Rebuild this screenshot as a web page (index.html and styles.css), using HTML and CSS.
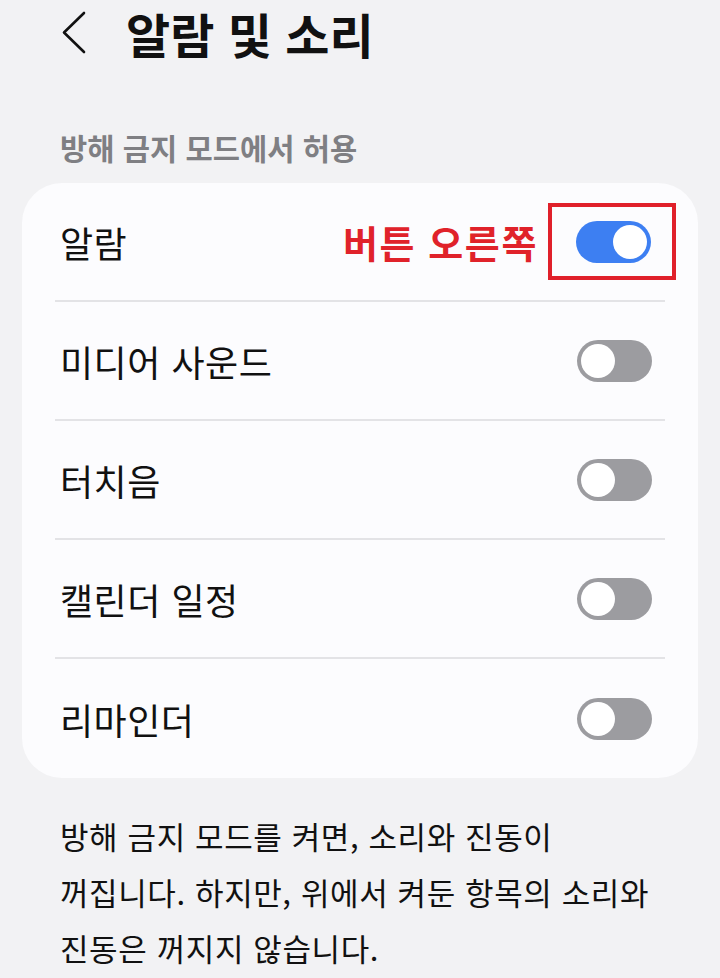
FILE: index.html
```html
<!DOCTYPE html>
<html lang="ko">
<head>
<meta charset="utf-8">
<link rel="stylesheet" href="styles.css">
</head>
<body>
<div class="page">
  <header class="topbar">
    <svg class="back" width="30" height="44" viewBox="0 0 30 44"><polyline points="24,3 4,22.5 24,42" fill="none" stroke="#111" stroke-width="2.6" stroke-linecap="round" stroke-linejoin="round"/></svg>
    <h1 class="title">알람 및 소리</h1>
  </header>
  <div class="section-label">방해 금지 모드에서 허용</div>
  <div class="card">
    <div class="row">
      <span class="label">알람</span>
      <span class="annot">버튼 오른쪽</span>
      <span class="hl"><span class="toggle on"><span class="knob"></span></span></span>
    </div>
    <div class="row">
      <span class="label">미디어 사운드</span>
      <span class="toggle"><span class="knob"></span></span>
    </div>
    <div class="row">
      <span class="label">터치음</span>
      <span class="toggle"><span class="knob"></span></span>
    </div>
    <div class="row">
      <span class="label">캘린더 일정</span>
      <span class="toggle"><span class="knob"></span></span>
    </div>
    <div class="row">
      <span class="label">리마인더</span>
      <span class="toggle"><span class="knob"></span></span>
    </div>
  </div>
  <p class="desc">방해 금지 모드를 켜면, 소리와 진동이<br>꺼집니다. 하지만, 위에서 켜둔 항목의 소리와<br>진동은 꺼지지 않습니다.</p>
</div>
</body>
</html>
```
FILE: styles.css
```css
* { box-sizing: border-box; }
html, body { margin: 0; padding: 0; }
body {
  background: #f2f2f4;
  font-family: "Noto Sans CJK KR", "Noto Sans", sans-serif;
  color: #111;
  width: 720px;
  height: 978px;
  overflow: hidden;
}
.page { padding: 0 22px; }
.topbar {
  display: flex;
  align-items: center;
  height: 66px;
  padding-left: 38px;
}
.back { display: block; margin-top: -2px; }
.title {
  margin: 0 0 0 36px;
  font-size: 48px;
  font-weight: 700;
  line-height: 62px;
  color: #111;
}
.section-label {
  margin-top: 62px;
  padding-left: 38px;
  font-size: 29.6px;
  font-weight: 700;
  color: #7f7f83;
  line-height: 40px;
}
.card {
  margin-top: 15px;
  background: #fcfcfe;
  border-radius: 40px;
  padding: 0 33px;
}
.row {
  height: 119px;
  display: flex;
  align-items: center;
  border-bottom: 2px solid #e3e3e6;
}
.row:last-child { border-bottom: none; }
.label {
  flex: 1;
  padding-left: 5px;
  font-size: 36px;
  font-weight: 400;
  letter-spacing: 0.5px;
  color: #111;
}
.annot {
  color: #e0222a;
  font-weight: 700;
  font-size: 38px;
  letter-spacing: 1.6px;
  margin-right: 10px;
}
.hl {
  display: flex;
  align-items: center;
  justify-content: center;
  width: 128px;
  height: 77px;
  border: 4px solid #e0202a;
  margin-right: -11px;
}
.toggle {
  width: 75px;
  height: 42px;
  border-radius: 21px;
  background: #9c9ca0;
  padding: 4px;
  display: flex;
  margin-right: 13px;
}
.hl .toggle { margin-right: 0; margin-left: 2px; }
.knob {
  width: 34px;
  height: 34px;
  border-radius: 50%;
  background: #fff;
}
.toggle.on { background: #3d7ff2; justify-content: flex-end; }
.desc {
  margin: 30px 0 0;
  padding-left: 38px;
  font-size: 31px;
  line-height: 56px;
  letter-spacing: 0.6px;
  color: #111;
}
```
